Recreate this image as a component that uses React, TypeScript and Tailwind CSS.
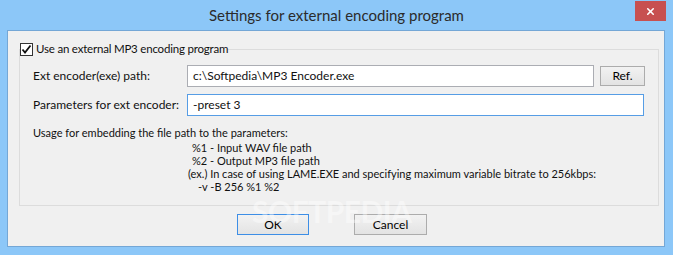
import { X } from 'lucide-react';

const font = { fontFamily: 'Lato, "Noto Sans", sans-serif' };

function WinButton({ label, primary, className = '' }: { label: string; primary?: boolean; className?: string }) {
  return (
    <button
      className={`flex items-center justify-center bg-gradient-to-b from-[#f2f2f2] to-[#e3e3e3] text-[12px] leading-none text-black ${
        primary ? 'border border-[#3d8ee6]' : 'border border-[#acacac]'
      } ${className}`}
    >
      {label}
    </button>
  );
}

function CheckBox() {
  return (
    <span className="flex h-[13px] w-[13px] items-center justify-center border border-[#333] bg-white">
      <svg width="11" height="11" viewBox="0 0 11 11">
        <path d="M1.5 5.5 L4 8.5 L9.5 1.5" fill="none" stroke="#111" strokeWidth="1.8" />
      </svg>
    </span>
  );
}

export default function App() {
  return (
    <div className="h-[255px] w-[673px] whitespace-nowrap bg-[#8cc7f8] text-[#111]" style={font}>
      <div className="relative flex h-[30px] items-center justify-center">
        <span className="text-[15px] text-[#2b2b2b]">Settings for external encoding program</span>
        <div className="absolute right-[7px] top-[1px] flex h-[20px] w-[31px] items-center justify-center bg-[#c75050]">
          <X size={11} color="white" strokeWidth={3.5} />
        </div>
      </div>

      <div className="relative ml-[7px] h-[217px] w-[658px] border border-[#74a7d6] bg-[#f0f0f0] px-[11px] pt-[10px] text-[11px]">
        <fieldset className="h-[165px] border border-[#dcdcdc]">
          <legend className="flex h-[16px] items-center gap-[3px] text-[11.5px] tracking-[-0.2px]">
            <CheckBox />
            <span>Use an external MP3 encoding program</span>
          </legend>

          <div className="px-[13px]">
            <div className="mt-[8px] flex items-center">
              <span className="w-[154px] text-[12px]">Ext encoder(exe) path:</span>
              <div className="flex h-[22px] w-[407px] items-center border border-[#abadb3] bg-white px-[5px] text-[12px]">
                c:\Softpedia\MP3 Encoder.exe
              </div>
              <WinButton label="Ref." className="ml-[6px] h-[20px] w-[45px]" />
            </div>

            <div className="mt-[7px] flex items-center">
              <span className="w-[154px] text-[12px]">Parameters for ext encoder:</span>
              <div className="flex h-[22px] w-[457px] items-center border border-[#569de5] bg-white px-[5px] text-[12px]">
                -preset 3
              </div>
            </div>

            <div className="mt-[10px] leading-[13px]">
              <div>Usage for embedding the file path to the parameters:</div>
              <div className="mt-[2px] pl-[159px]">%1 - Input WAV file path</div>
              <div className="pl-[159px]">%2 - Output MP3 file path</div>
              <div className="pl-[155px]">(ex.) In case of using LAME.EXE and specifying maximum variable bitrate to 256kbps:</div>
              <div className="pl-[165px]">-v -B 256 %1 %2</div>
            </div>
          </div>
        </fieldset>

        <div className="ml-[218px] mt-[8px] flex gap-[45px]">
          <WinButton label="OK" primary className="h-[21px] w-[72px]" />
          <WinButton label="Cancel" className="h-[21px] w-[73px]" />
        </div>

        <span className="pointer-events-none absolute left-[244px] top-[165px] text-[30px] font-bold leading-none tracking-[-0.5px] text-white opacity-40">
          SOFTPEDIA
        </span>
      </div>
    </div>
  );
}
